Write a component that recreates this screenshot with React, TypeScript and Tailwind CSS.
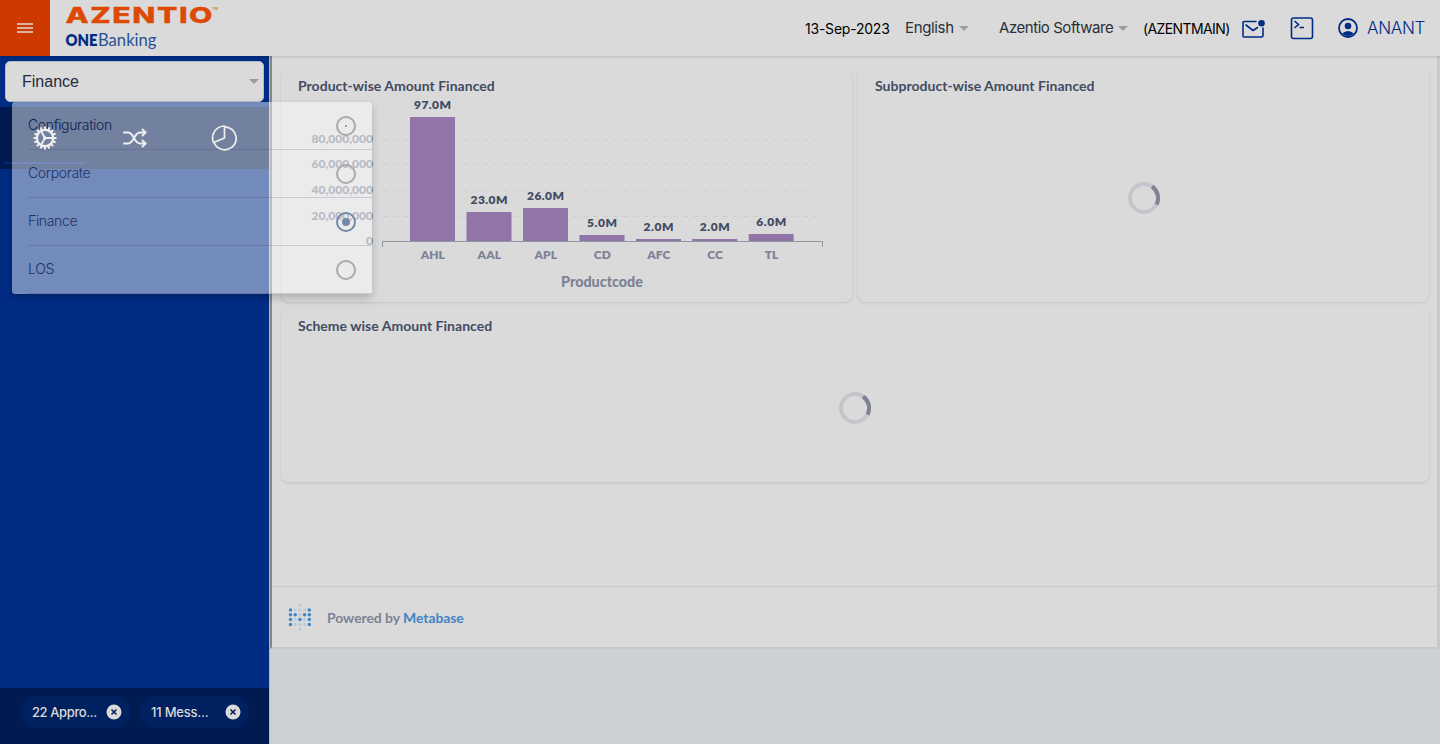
import React from "react";

const bars = [
  { code: "AHL", label: "97.0M", x: 410, top: 117, w: 37 },
  { code: "AAL", label: "23.0M", x: 466.5, top: 212, w: 37 },
  { code: "APL", label: "26.0M", x: 523, top: 208, w: 37 },
  { code: "CD", label: "5.0M", x: 579.5, top: 235, w: 30 },
  { code: "AFC", label: "2.0M", x: 636, top: 239, w: 30 },
  { code: "CC", label: "2.0M", x: 692.3, top: 239, w: 30 },
  { code: "TL", label: "6.0M", x: 748.7, top: 234, w: 30 },
];

const ticks = [
  { label: "80,000,000", y: 139 },
  { label: "60,000,000", y: 164 },
  { label: "40,000,000", y: 190 },
  { label: "20,000,000", y: 216 },
];

function Caret({ className }: { className: string }) {
  return (
    <svg viewBox="0 0 10 5" className={`h-[5px] w-[10px] shrink-0 ${className}`}>
      <path d="M0 0H10L5 5Z" fill="#9b9d9f" />
    </svg>
  );
}

function Chart() {
  return (
    <svg viewBox="281 68 571 234" className="block h-[234px] w-[571px]" fontFamily="Lato, sans-serif">
      {ticks.map((t) => (
        <g key={t.y}>
          <line x1="383" x2="819" y1={t.y + 0.5} y2={t.y + 0.5} stroke="#cdcecf" strokeDasharray="5 5" />
          <text x="373" y={t.y + 4} textAnchor="end" fontSize="12" fontWeight="900" fill="#7d8294" textLength="61.500">
            {t.label}
          </text>
        </g>
      ))}
      <text x="373" y="245" textAnchor="end" fontSize="12" fontWeight="900" fill="#7d8294">0</text>
      {bars.map((b) => (
        <g key={b.code} textAnchor="middle" fontWeight="800" fontSize="12">
          <rect x={b.x} y={b.top} width="45" height={241 - b.top} fill="#9275a8" />
          <text x={b.x + 22.5} y={b.top - 8} fill="#434b63" textLength={b.w}>{b.label}</text>
          <text x={b.x + 22.8} y="259" fill="#7d8294">{b.code}</text>
        </g>
      ))}
      <path d="M382.500 247V241.500H822.500V247" fill="none" stroke="#9196a3" />
      <text x="602" y="287" textAnchor="middle" fontSize="14.500" fontWeight="900" fill="#7d8294" textLength="82" lengthAdjust="spacingAndGlyphs">
        Productcode
      </text>
    </svg>
  );
}

function Spinner({ className }: { className: string }) {
  return (
    <svg viewBox="0 0 32 32" className={`h-8 w-8 ${className}`} fill="none" strokeWidth="4">
      <circle cx="16" cy="16" r="14" stroke="#c4c6cb" />
      <path d="M24 4.500A14 14 0 0 1 28.500 22.500" stroke="#7e8395" />
    </svg>
  );
}

function Card({ title, className, children }: { title: string; className: string; children?: React.ReactNode }) {
  return (
    <section className={`grid rounded-lg shadow-[0_1px_3px_rgba(0,0,0,0.11)] ${className}`}>
      <h2 className="col-start-1 row-start-1 pl-[17px] pt-[8px] font-[Lato] text-[14px] font-bold leading-[20px] tracking-[0.02px] text-[#434b63]">
        {title}
      </h2>
      <div className="col-start-1 row-start-1 flex">{children}</div>
    </section>
  );
}

function Gear() {
  const teeth = Array.from({ length: 16 }, (_, i) => i * 22.5);
  return (
    <svg viewBox="-12 -12 24 24" className="h-6 w-6" stroke="#efefef" fill="none">
      <circle r="8.200" strokeWidth="2.400" />
      {teeth.map((a) => (
        <path key={a} d="M0-8.500V-11.500" strokeWidth="2" transform={`rotate(${a})`} />
      ))}
      <path d="M0 0H8M0 0L-4-7M0 0L-4 7" strokeWidth="1.900" />
      <circle r="1.300" fill="#efefef" />
    </svg>
  );
}

function Shuffle() {
  return (
    <svg viewBox="0 0 24 20" className="h-5 w-6" fill="none" stroke="#efefef" strokeWidth="1.900" strokeLinecap="round" strokeLinejoin="round">
      <path d="M1 4.500H5C11 4.500 11 15.500 17 15.500H22.500M1 15.500H5C11 15.500 11 4.500 17 4.500H22.500" />
      <path d="M19.500 1.500L22.500 4.500L19.500 7.500M19.500 12.500L22.500 15.500L19.500 18.500" />
    </svg>
  );
}

function Pie() {
  return (
    <svg viewBox="0 0 26 26" className="h-[26px] w-[26px]" fill="none" stroke="#efefef" strokeWidth="1.700" strokeLinejoin="round">
      <path d="M13.500 1.800A11.500 11.500 0 1 1 3 17.500" />
      <path d="M13.500 1V13L2.500 17.500A12 12 0 0 1 13.500 1Z" />
    </svg>
  );
}

function Option({ label, state, hover }: { label: string; state: "off" | "on" | "dot"; hover?: boolean }) {
  return (
    <div className="ml-4 flex h-12 items-center justify-between border-b border-[rgba(30,40,80,0.16)] pr-4">
      <span className={`relative -top-px text-[14px] font-light tracking-[-0.34px] ${hover ? "text-[#0d2050]" : "text-[#1a3366]"}`}>{label}</span>
      <svg viewBox="0 0 20 20" className="h-5 w-5">
        <circle cx="10" cy="10" r="9" fill="none" strokeWidth="2" stroke={state === "on" ? "#718aa8" : "#a9a9a9"} />
        {state === "on" && <circle cx="10" cy="10" r="4" fill="#718aa8" />}
        {state === "dot" && <circle cx="10" cy="10" r="1" fill="#718aa8" />}
      </svg>
    </div>
  );
}

function Chip({ text, className, tracking }: { text: string; className: string; tracking: string }) {
  return (
    <div className={`flex h-8 w-[110px] items-center rounded-full bg-[#00215f] pl-3 text-[13px] font-medium text-[#dadada] ${className}`}>
      <span className={`w-[74px] shrink-0 whitespace-nowrap pt-px ${tracking}`}>{text}</span>
      <svg viewBox="0 0 16 16" className="h-4 w-4 shrink-0">
        <circle cx="8" cy="8" r="7.500" fill="#dadada" />
        <path d="M5.500 5.500L10.500 10.500M10.500 5.500L5.500 10.500" stroke="#001b52" strokeWidth="1.500" />
      </svg>
    </div>
  );
}

function Metabase() {
  const rows = ["10001", "11011", "10101", "10001"];
  return (
    <svg viewBox="0 0 24 28" className="h-7 w-6">
      {rows.map((r, j) =>
        r.split("").map((c, i) => (
          <circle key={`${j}-${i}`} cx={2.5 + i * 4.7} cy={7 + j * 4.8} r="1.750" fill={c === "1" ? "#3f86c5" : "#bdcbd6"} />
        ))
      )}
      <circle cx="11.900" cy="1.900" r="1.700" fill="#bdcbd6" />
      <circle cx="11.900" cy="26.100" r="1.700" fill="#bdcbd6" />
    </svg>
  );
}

export default function App() {
  return (
    <div className="relative flex h-[744px] w-[1440px] flex-col overflow-hidden bg-[#cdd1d5] font-[Inter]">
      <header className="z-10 flex h-14 shrink-0 bg-[#dadada] shadow-[0_1px_3px_rgba(0,0,0,0.15)]">
        <button className="flex w-[50px] items-center justify-center bg-[#cd3900]">
          <svg viewBox="0 0 16 10" className="h-[10px] w-4" stroke="#dadada" strokeWidth="1.500">
            <path d="M0 1H16M0 5H16M0 9H16" />
          </svg>
        </button>
        <svg viewBox="50 0 180 56" className="h-14 w-[180px]">
          <g transform="translate(65.500 23) scale(1.42 1)">
            <text fontFamily="Inter, sans-serif" fontSize="21.300" fontWeight="800" fill="#dd4a05" stroke="#dd4a05" strokeWidth="0.300" textLength="103.500">AZENTIO</text>
          </g>
          <text x="212" y="10" fontFamily="Inter, sans-serif" fontSize="4" fill="#dd4a05">TM</text>
          <text x="65.500" y="45.500" fontFamily="Lato, sans-serif" fontSize="16" fontWeight="800" fill="#002c84" textLength="32" lengthAdjust="spacingAndGlyphs">ONE</text>
          <text x="98" y="45.500" fontFamily="Lato, sans-serif" fontSize="16.500" fill="#2a4f95" textLength="58.500" lengthAdjust="spacingAndGlyphs">Banking</text>
        </svg>
        <div className="flex flex-1 items-center whitespace-nowrap pl-[575px] text-[15px] text-[#2b2f36]">
          <span className="w-[100px] text-[14px] tracking-[-0.22px] text-black">13-Sep-2023</span>
          <span className="w-[54px] pt-px tracking-[-0.35px]">English</span>
          <Caret className="mr-[30px]" />
          <span className="w-[119px] pt-px tracking-[-0.45px]">Azentio Software</span>
          <Caret className="mr-[15px]" />
          <span className="w-[99px] text-[14px] tracking-[-0.6px] text-black">(AZENTMAIN)</span>
          <svg viewBox="0 0 24 20" className="mr-[24px] h-5 w-6 shrink-0" fill="none" stroke="#002c84" strokeWidth="1.600" strokeLinejoin="round" strokeLinecap="round">
            <path d="M14 3.500H2Q1 3.500 1 4.500V18Q1 19 2 19H19.500Q21 19 21 17.500V10" />
            <path d="M4 7L11 12.500L15.500 9.500" />
            <circle cx="19.500" cy="5.300" r="3.300" fill="#002c84" stroke="none" />
          </svg>
          <svg viewBox="0 0 24 24" className="mr-[24px] h-6 w-6 shrink-0" fill="none" stroke="#002c84" strokeWidth="1.600">
            <rect x="1.500" y="2" width="21" height="20.500" rx="2" />
            <path d="M4.500 5L8.500 8.500L4.500 12M9.500 11.500H14" />
          </svg>
          <svg viewBox="0 0 20 20" className="h-5 w-5 shrink-0">
            <circle cx="10" cy="10" r="9" fill="none" stroke="#002c84" strokeWidth="1.800" />
            <circle cx="10" cy="8" r="3.300" fill="#002c84" />
            <path d="M4 15.500Q10 10.500 16 15.500Q10 20.500 4 15.500Z" fill="#002c84" />
          </svg>
          <span className="ml-[9px] pt-[2px] text-[17px] font-light tracking-[-0.3px] text-[#002c84]">ANANT</span>
        </div>
      </header>

      <div className="flex min-h-0 flex-1">
        <aside className="flex w-[270px] flex-col border-r border-[#b5bac2] bg-[#002c84]">
          <div className="mx-[5px] mt-[5px] flex h-[41px] shrink-0 items-center justify-between rounded-[5px] border border-[#b3bccd] bg-[#dadada] pl-4 pr-[4px] font-['Liberation_Sans'] text-[16px] text-[#222c3a]">
            Finance
            <Caret className="" />
          </div>
          <nav className="mt-[5px] h-[62px] shrink-0 bg-[#001b52]">
            <div className="ml-[5px] h-[57px] w-20 border-b-2 border-[#002c84]" />
          </nav>
          <div className="flex-1" />
          <footer className="flex h-[56px] items-start bg-[#001b52] pl-5 pt-[8px]">
            <Chip text="22 Appro..." className="mr-[9px]" tracking="tracking-[-0.4px]" />
            <Chip text="11 Mess..." className="" tracking="tracking-[-0.2px]" />
          </footer>
        </aside>

        <main className="flex-1">
          <div className="flex h-[593px] flex-col border-b-2 border-l-2 border-r-[3px] border-b-[#c7c8c9] border-l-[#858585] border-r-[#c9c9c9] bg-[#dadada]">
            <div className="flex-1 pl-[9px] pt-3">
              <div className="flex gap-[6px]">
                <Card title="Product-wise Amount Financed" className="h-[234px] w-[571px]"><Chart /></Card>
                <Card title="Subproduct-wise Amount Financed" className="h-[234px] w-[571px]">
                  <Spinner className="ml-[270px] mt-[114px]" />
                </Card>
              </div>
              <Card title="Scheme wise Amount Financed" className="mt-[6px] h-[174px] w-[1148px]">
                <Spinner className="ml-[558px] mt-[84px]" />
              </Card>
            </div>
            <footer className="flex h-[61px] items-center border-t border-[#cacaca] pl-4 font-[Lato] text-[14px] font-bold tracking-[-0.08px] text-[#7d8294]">
              <Metabase />
              <span className="ml-[15px]">Powered by <span className="text-[#4383c4]">Metabase</span></span>
            </footer>
          </div>
        </main>
      </div>

      <div className="absolute left-3 top-[102px] z-20 h-48 w-[360px] overflow-hidden rounded-[3px] bg-white/45 shadow-[0_4px_8px_rgba(0,0,0,0.2)]">
        <Option label="Configuration" state="dot" hover />
        <Option label="Corporate" state="off" />
        <Option label="Finance" state="on" />
        <Option label="LOS" state="off" />
      </div>
      <div className="absolute left-[33px] top-[125px] z-30 flex h-[26px] items-center">
        <Gear />
        <span className="ml-[66px] flex"><Shuffle /></span>
        <span className="ml-[64px] flex"><Pie /></span>
      </div>
    </div>
  );
}
